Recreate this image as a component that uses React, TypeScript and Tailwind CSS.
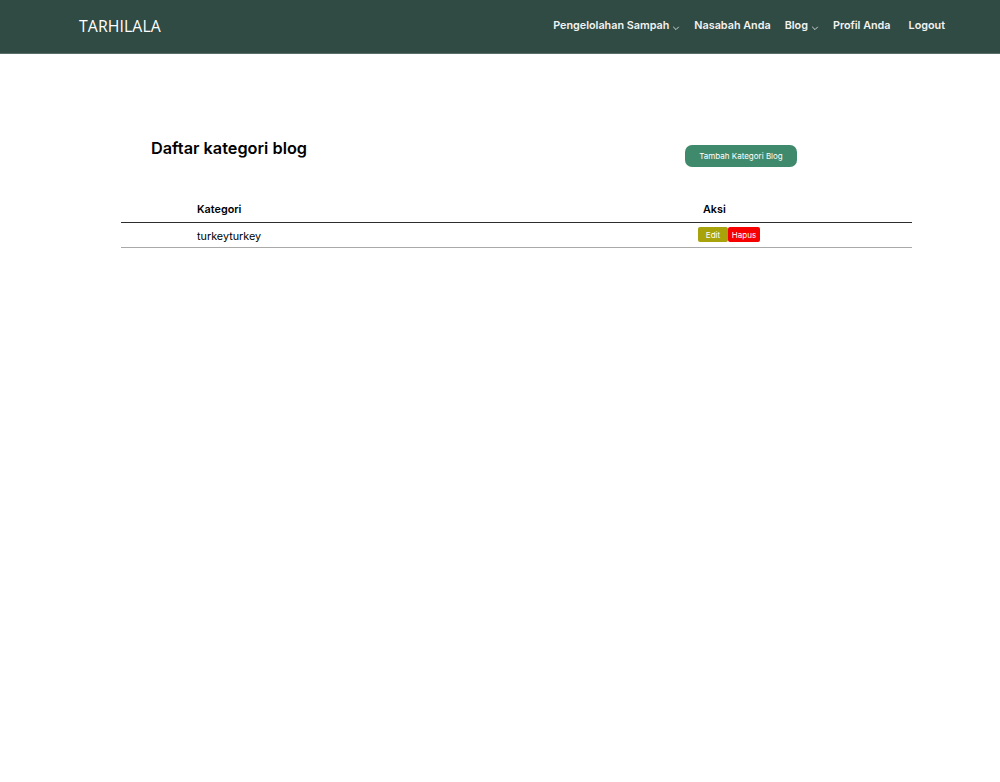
import React from "react";

const Chevron = () => (
  <svg width="8" height="8" viewBox="0 0 10 10" className="ml-[3px] mt-[3px]" fill="none">
    <path d="M1.5 3.5 L5 7 L8.5 3.5" stroke="#e5e7eb" strokeWidth="1.1" />
  </svg>
);

const navItems = [
  { label: "Pengelolahan Sampah", drop: true },
  { label: "Nasabah Anda", drop: false },
  { label: "Blog", drop: true },
  { label: "Profil Anda", drop: false },
];

const rows = [{ name: "turkeyturkey" }];

const App = () => {
  return (
    <div className="min-h-[782px] bg-white font-['Inter','Liberation_Sans',sans-serif]">
      <nav className="h-[54px] bg-[#304a44] flex items-center justify-between pl-[79px] pr-[55px] border-b border-[#5b6f6a]">
        <span className="text-white text-[15.8px] tracking-[0.1px] font-['Open_Sans','Inter',sans-serif]">
          TARHILALA
        </span>
        <ul className="flex items-center text-[10.8px] font-semibold text-[#f1f3f2]">
          {navItems.map((item, i) => (
            <li key={i} className="flex items-center mr-[14px]">
              {item.label}
              {item.drop && <Chevron />}
            </li>
          ))}
          <li className="ml-[4px]">Logout</li>
        </ul>
      </nav>

      <main className="pl-[121px] w-[912px] pt-[81px]">
        <div className="flex items-start">
          <h1 className="ml-[30px] text-[16.3px] font-semibold text-black leading-[22px] mt-[2px]">
            Daftar kategori blog
          </h1>
          <button className="ml-[378px] mt-[10px] w-[112px] h-[22px] rounded-[7px] bg-[#3f8a6d] text-[8px] text-white">
            Tambah Kategori Blog
          </button>
        </div>

        <table className="mt-[28px] w-full text-[10.8px] text-black border-collapse">
          <thead>
            <tr className="border-b border-[#2d2d2d]">
              <th className="text-left font-semibold pl-[76px] w-[577px] h-[27px] pt-[3px]">Kategori</th>
              <th className="text-left font-semibold pl-[5px] pt-[3px]">Aksi</th>
            </tr>
          </thead>
          <tbody>
            {rows.map((r, i) => (
              <tr key={i} className="border-b border-[#a9a9a9]">
                <td className="pl-[76px] h-[25px] pt-[6px]">{r.name}</td>
                <td>
                  <div className="flex">
                    <button className="w-[30px] h-[15px] rounded-[2px] bg-[#a8a30a] text-white text-[8px]">
                      Edit
                    </button>
                    <button className="w-[32px] h-[15px] rounded-[2px] bg-[#f70000] text-white text-[8px]">
                      Hapus
                    </button>
                  </div>
                </td>
              </tr>
            ))}
          </tbody>
        </table>
      </main>
    </div>
  );
};

export default App;
